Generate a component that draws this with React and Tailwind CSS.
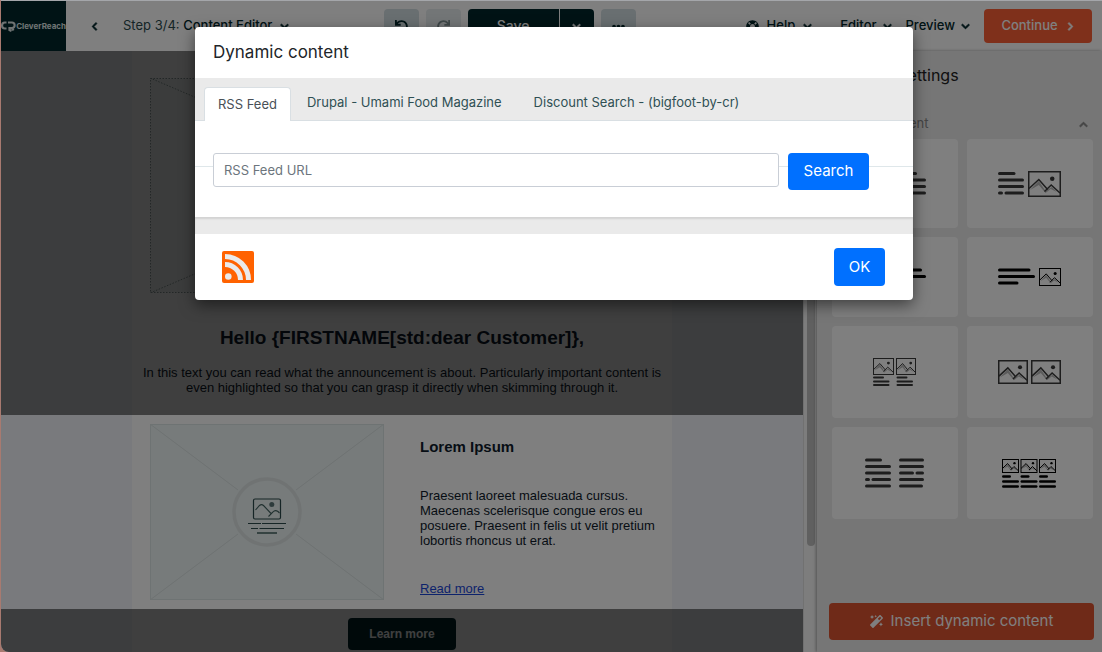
import React from "react";
import { FaChevronDown, FaChevronUp, FaChevronLeft, FaChevronRight, FaUndo, FaRedo, FaEllipsisH, FaMagic, FaLifeRing } from "react-icons/fa";

function Pic({ x = 0, y = 0, w, h, color = "#3a3a3a", thick = 1 }) {
  const px = (v) => x + (v / 32) * w;
  const py = (v) => y + (v / 26) * h;
  const pts = (list) => list.map(([a, b]) => `${px(a)},${py(b)}`).join(" ");
  return (
    <g fill="none" stroke={color} strokeWidth={thick}>
      <polygon points={pts([[2, 19], [10.5, 10], [17, 20], [23, 16], [28, 21], [22, 18], [17, 22], [10.5, 14]])} fill="#b8b8b8" stroke="none" />
      <rect x={x + thick / 2} y={y + thick / 2} width={w - thick} height={h - thick} />
      <polyline points={pts([[1, 17.5], [10.5, 8.5], [19, 18.5]])} />
      <polyline points={pts([[16, 20.5], [22.5, 14], [31, 22]])} />
      <circle cx={px(23.5)} cy={py(7.8)} r={(w / 32) * 2.2} fill={color} stroke="none" />
    </g>
  );
}

function Bars({ rows, color = "#3a3a3a", thick = 3 }) {
  return (
    <g stroke={color} strokeWidth={thick} strokeLinecap="round">
      {rows.map(([x1, x2, y], i) => (
        <line key={i} x1={x1 + thick / 2} x2={x2 - thick / 2} y1={y} y2={y} />
      ))}
    </g>
  );
}

const cards = [
  {
    label: "Image left, text right", w: 64, h: 26,
    art: <><Pic w={33} h={26} thick={1.5} /><Bars rows={[[37, 54, 2.5], [37, 63, 9], [37, 63, 15.5], [37, 42, 22], [43.5, 63, 22]]} /></>,
  },
  {
    label: "Text left, image right", w: 64, h: 26,
    art: <><Bars rows={[[0, 17.5, 2.5], [0, 26, 9], [0, 26, 15.5], [0, 5, 22], [6.5, 26, 22]]} /><Pic x={30} w={33} h={26} thick={1.5} /></>,
  },
  {
    label: "Small image left, text right", w: 64, h: 18,
    art: <><Pic w={22} h={18} color="#000" /><Bars color="#000" rows={[[26, 59, 2], [26, 63, 8.5], [26, 46, 15]]} /></>,
  },
  {
    label: "Text left, small image right", w: 64, h: 18,
    art: <><Bars color="#000" rows={[[0, 32.5, 2], [0, 37, 8.5], [0, 20.5, 15]]} /><Pic x={41} w={22} h={18} color="#000" /></>,
  },
  {
    label: "Two images with text", w: 44, h: 28,
    art: <><Pic w={21} h={17} /><Pic x={23} w={20} h={17} /><Bars thick={2} rows={[[0, 11, 19.5], [0, 16.5, 23.5], [0, 16.5, 27], [23.5, 34.5, 19.5], [23.5, 40, 23.5], [23.5, 40, 27]]} /></>,
  },
  {
    label: "Two images", w: 64, h: 25,
    art: <><Pic w={30} h={24} thick={1.5} /><Pic x={33} w={30} h={24} thick={1.5} /></>,
  },
  {
    label: "Two text columns", w: 60, h: 30,
    art: <Bars rows={[[0, 17, 2], [0, 26, 8.5], [0, 26, 15], [0, 5, 21.5], [6.5, 26, 21.5], [0, 26, 28], [34, 59, 2], [34, 59, 8.5], [34, 49, 15], [50.5, 59, 15], [34, 59, 21.5], [34, 58, 28]]} />,
  },
  {
    label: "Three images with text", w: 56, h: 29,
    art: <>
      {[0, 18.5, 37].map((x) => <Pic key={x} x={x} w={17} h={14} color="#000" />)}
      <Bars color="#000" thick={2.5} rows={[0, 18.5, 37].flatMap((x) => [[x, x + 9, 17.5], [x, x + 17, 22.5], [x, x + 17, 27.5]])} />
    </>,
  },
];

const chevron = "text-[9px] overflow-visible stroke-current stroke-[45]";

function Header() {
  return (
    <header className="flex h-[50px] items-center bg-white text-[13px] text-[#00262b]">
      <a href="#home" aria-label="CleverReach" className="flex h-full w-[65px] items-center justify-between bg-[#00262b] text-[#dfe6e6]">
        <svg width="15" height="11" viewBox="0 0 15 11" fill="none" stroke="currentColor" strokeWidth="2.2" className="shrink-0">
          <path d="M5.500 1.500H3.800a2.700 2.700 0 0 0-2.700 2.700v.6a2.700 2.700 0 0 0 2.700 2.700H5.500" />
          <path d="M7 1.500h4a2.600 2.600 0 0 1 2.600 2.800a2.600 2.600 0 0 1-2.600 2.800H8.500V9l2 1M11 7l1.500 2.500" />
        </svg>
        <span className="text-[8px] font-bold">CleverReach</span>
      </a>
      <button aria-label="Back" className="ml-6"><FaChevronLeft className={chevron} /></button>
      <button className="ml-6 flex items-center gap-2">
        <span className="whitespace-nowrap text-[#2b4a4e]">Step 3/4: <span className="font-medium text-[#00262b]">Content Editor</span></span>
        <FaChevronDown className={chevron} />
      </button>
      <div className="ml-auto flex gap-[7px] pr-[110px]">
        <button aria-label="Undo" className="flex h-[34px] w-[35px] items-center justify-center rounded bg-[#d3dee2]"><FaUndo /></button>
        <button aria-label="Redo" className="flex h-[34px] w-[35px] items-center justify-center rounded bg-[#e6ecee] text-[#7f9093]"><FaRedo /></button>
        <div className="flex gap-px">
          <button className="h-[34px] w-[91px] rounded-l bg-[#00262b] text-sm font-medium text-white">Save</button>
          <button aria-label="Save options" className="flex h-[34px] w-[34px] items-center justify-center rounded-r bg-[#00262b] text-white"><FaChevronDown className={chevron} /></button>
        </div>
        <button aria-label="More" className="flex h-[34px] w-[35px] items-center justify-center rounded bg-[#d3dee2]"><FaEllipsisH /></button>
      </div>
      <nav className="flex items-center font-medium">
        <button className="flex items-center gap-2"><FaLifeRing />Help<FaChevronDown className={chevron} /></button>
        <button className="ml-7 flex items-center gap-1.5">Editor<FaChevronDown className={chevron} /></button>
        <button className="ml-3.5 flex items-center gap-1.5">Preview<FaChevronDown className={chevron} /></button>
      </nav>
      <button className="ml-3.5 mr-2.5 flex h-[34px] w-[108px] shrink-0 items-center justify-center gap-2 rounded bg-[#ff6036] font-medium text-white">
        Continue<FaChevronRight className={chevron} />
      </button>
    </header>
  );
}

function Row({ dark, className, children }) {
  return (
    <section className="relative flex justify-center">
      <div className={`w-full max-w-[540px] bg-white ${className}`}>{children}</div>
      {dark && <div className="absolute inset-0 bg-black/50" />}
    </section>
  );
}

function Canvas() {
  return (
    <main className="min-w-0 flex-1 bg-[#f2f4fa] font-['Liberation_Sans',Arial,sans-serif] text-[13px] leading-[15px] text-[#0e1a2b]">
      <Row dark className="px-2 pb-5 pt-[27px]">
        <svg viewBox="0 0 504 215" className="mx-auto block w-[504px]" fill="none" stroke="#8c9c9c" strokeDasharray="1.500 1.500">
          <rect x=".5" y=".5" width="503" height="214" fill="#eef3f2" />
          <path d="M0 0 504 215M504 0 0 215" />
        </svg>
        <h1 className="mt-[33px] text-center text-[19px] font-bold leading-6">Hello {"{FIRSTNAME[std:dear Customer]}"},</h1>
        <p className="mt-[15px] text-center">
          In this text you can read what the announcement is about. Particularly important content is even highlighted so that you can grasp it directly when skimming through it.
        </p>
      </Row>
      <Row className="flex gap-9 py-[9px] pl-[18px] pr-2">
        <svg viewBox="0 0 234 176" className="w-[234px] shrink-0" fill="none">
          <rect x=".5" y=".5" width="233" height="175" fill="#eef6f6" stroke="#dce7e7" />
          <path d="M0 0 88 66M234 0 146 66M0 176 88 110M234 176 146 110" stroke="#dce4e4" />
          <circle cx="117" cy="88" r="33" stroke="#e0e7e7" strokeWidth="3.5" />
          <rect x="103.500" y="75" width="27" height="20" rx="1.500" stroke="#2c4a4c" strokeWidth="1.2" />
          <path d="M105.500 86l4-4.500q2-1.800 4 0l8 8.500M118.500 92.500l4.500-4.500q2-2.500 5-.5l1.500 1.500" stroke="#41605f" strokeWidth="1.1" />
          <circle cx="121.800" cy="80.500" r="2.500" fill="#5d7778" />
          <path d="M98 99.500h13M112 99.500h24M101 104.500h7M109.500 104.500h24.500" stroke="#2c4a4c" />
          <path d="M107 109h20" stroke="#41605f" strokeWidth="1.500" />
        </svg>
        <div>
          <h2 className="mt-[15px] text-[15px] font-bold leading-4">Lorem Ipsum</h2>
          <p className="mt-[33px]">
            Praesent laoreet malesuada cursus. Maecenas scelerisque congue eros eu posuere. Praesent in felis ut velit pretium lobortis rhoncus ut erat.
          </p>
          <a href="#more" className="mt-[33px] block text-[#1b47d8] underline">Read more</a>
        </div>
      </Row>
      <Row dark className="flex justify-center pb-0.5 pt-[9px]">
        <button className="h-8 w-[108px] rounded-sm bg-[#00262b] text-xs font-bold text-white">Learn more</button>
      </Row>
    </main>
  );
}

function Sidebar() {
  return (
    <aside className="flex w-[285px] shrink-0 flex-col bg-[#ececec] pb-3 shadow-[-1px_0_3px_rgba(0,0,0,0.35)]">
      <h2 className="ml-[15px] mt-3 text-base leading-6 text-[#222]">Element Settings</h2>
      <button className="ml-[15px] mr-3.5 mt-[26px] flex h-[22px] items-center justify-between text-[13px] text-[#8a8a8a]">
        Add an element<FaChevronUp className={chevron} />
      </button>
      <div className="ml-[15px] mr-[9px] mt-1 grid grid-cols-2 grid-rows-[89px_80px_92px_92px] gap-[9px]">
        {cards.map((c) => (
          <button key={c.label} aria-label={c.label} className="flex items-center justify-center rounded bg-white">
            <svg width={c.w} height={c.h} viewBox={`0 0 ${c.w} ${c.h}`}>{c.art}</svg>
          </button>
        ))}
      </div>
      <button className="ml-3 mr-2 mt-auto flex h-[37px] items-center justify-center gap-2 rounded bg-[#df5430] text-[15px] text-white">
        <FaMagic className="text-[13px]" />Insert dynamic content
      </button>
    </aside>
  );
}

function Modal() {
  return (
    <div role="dialog" aria-label="Dynamic content" className="w-full max-w-[718px] rounded bg-white shadow-[0_5px_15px_rgba(0,0,0,0.5)]">
      <h2 className="flex h-[51px] items-center px-[18px] text-[17px] text-[#212529]">Dynamic content</h2>
      <div role="tablist" className="flex h-[43px] items-end border-b border-[#d9dfe3] bg-[#eaeaea] pl-[9px] text-[13px] text-[#2f5054]">
        <button role="tab" aria-selected="true" className="-mb-px h-[34px] rounded-t border border-b-0 border-[#d9dfe3] bg-white px-[13px] text-[#495057]">RSS Feed</button>
        <button role="tab" aria-selected="false" className="h-[34px] px-4">Drupal - Umami Food Magazine</button>
        <button role="tab" aria-selected="false" className="h-[34px] px-4">Discount Search - (bigfoot-by-cr)</button>
      </div>
      <div className="relative flex items-start gap-[9px] pb-[27px] pl-[18px] pr-11 pt-8">
        <div className="absolute inset-x-0 top-[45px] h-px bg-[#dfe7ea]" />
        <input aria-label="RSS Feed URL" placeholder="RSS Feed URL" className="relative h-[34px] min-w-0 flex-1 rounded-[3px] border border-[#c9ced6] bg-white px-2.5 text-[13px] outline-none placeholder:text-[#6c757d]" />
        <button className="relative h-[37px] w-[81px] rounded bg-[#0070ff] text-[15px] text-white">Search</button>
      </div>
      <div className="h-[17px] bg-[#eaeaea] shadow-[inset_0_2px_2px_rgba(0,0,0,0.1)]" />
      <div className="flex items-center justify-between py-3.5 pl-[27px] pr-7">
        <svg width="32" height="32" viewBox="0 0 32 32" role="img" aria-label="RSS">
          <rect width="32" height="32" rx="2" fill="#ff6200" />
          <circle cx="6.300" cy="25.500" r="3.300" fill="#eaeaea" />
          <path d="M3 13.500A15.500 15.500 0 0 1 18.500 29M3 5.500A23.500 23.500 0 0 1 26.500 29" fill="none" stroke="#eaeaea" strokeWidth="5" />
        </svg>
        <button className="h-[38px] w-[51px] rounded bg-[#0070ff] text-[15px] text-white">OK</button>
      </div>
    </div>
  );
}

export default function App() {
  return (
    <div className="flex min-h-screen bg-[#a87a70] font-['Inter',sans-serif]">
      <div className="relative ml-px flex flex-1 flex-col overflow-hidden rounded-bl-lg border-t border-[#a4a6aa]">
        <Header />
        <div className="flex flex-1">
          <Canvas />
          <div className="flex w-3.5 shrink-0 justify-center border-l border-[#e3e3e3] bg-[#fafafa]">
            <div className="h-[495px] w-2 rounded-full bg-[#c1c1c1]" />
          </div>
          <Sidebar />
        </div>
        <div className="absolute inset-0 flex items-start justify-center bg-black/50 pl-[5px] pt-[26px]">
          <Modal />
        </div>
      </div>
    </div>
  );
}
